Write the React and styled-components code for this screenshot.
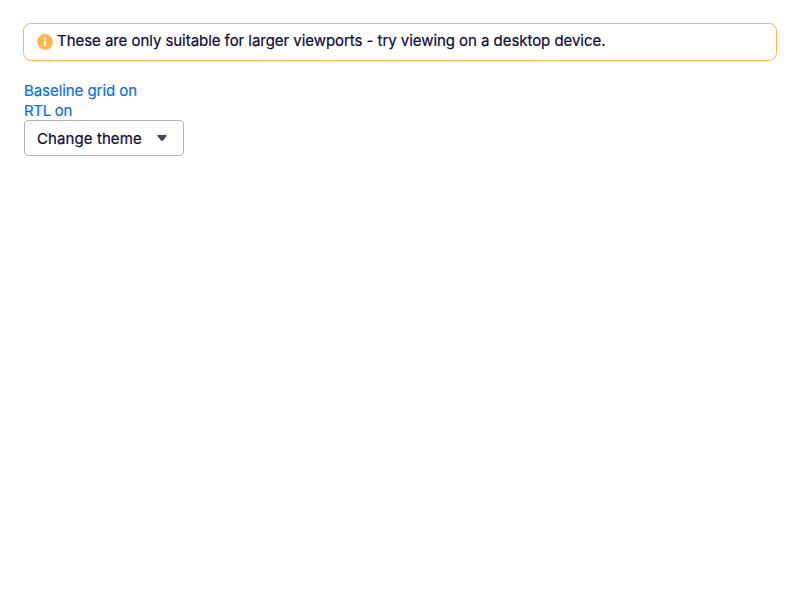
import React from "react";
import styled, { createGlobalStyle } from "styled-components";

const GlobalStyle = createGlobalStyle`
  * { box-sizing: border-box; }
  body {
    margin: 0;
    background: #fff;
    color: #0c0838;
    font: 400 15px/20px Inter, sans-serif;
    -webkit-text-stroke: 0.2px currentColor;
  }
`;

const Page = styled.main`
  display: flex;
  flex-direction: column;
  align-items: flex-start;
  padding: 23px 23px 0;
`;

const Banner = styled.div`
  display: flex;
  align-items: flex-start;
  align-self: stretch;
  height: 38px;
  padding: 7px 12px;
  border: 1px solid #ffb54d;
  border-radius: 8px;
`;

const InfoIcon = styled.svg`
  flex: none;
  width: 16px;
  height: 16px;
  margin: 3px 4px 0 1px;
`;

const FitText = styled.span`
  white-space: nowrap;
  letter-spacing: ${(p) => p.$spacing};
`;

const Controls = styled.div`
  display: flex;
  flex-direction: column;
  align-items: flex-start;
  margin: 20px 0 0 1px;
`;

const ActionLink = styled.a`
  color: #0770e3;
  text-decoration: none;
  cursor: pointer;
`;

const ThemeButton = styled.button`
  display: flex;
  align-items: flex-start;
  justify-content: space-between;
  width: 160px;
  height: 36px;
  margin-top: -1px;
  padding: 8px 16px 0 12px;
  border: 1px solid #b2b1bd;
  border-radius: 4px;
  background: #fff;
  color: inherit;
  font: inherit;
`;

const Caret = styled.svg`
  width: 10px;
  height: 6px;
  margin-top: 6px;
`;

export default function App() {
  return (
    <>
      <GlobalStyle />
      <Page>
        <Banner>
          <InfoIcon viewBox="0 0 16 16">
            <circle cx="8" cy="8" r="7.9" fill="#ffb54d" />
            <circle cx="8" cy="4.6" r="1.2" fill="#fff" />
            <rect x="7" y="6.8" width="2" height="5.4" rx="0.8" fill="#fff" />
          </InfoIcon>
          <FitText $spacing="-0.05px">
            These are only suitable for larger viewports - try viewing on a desktop device.
          </FitText>
        </Banner>
        <Controls>
          <ActionLink><FitText $spacing="-0.06px">Baseline grid on</FitText></ActionLink>
          <ActionLink><FitText $spacing="-0.3px">RTL on</FitText></ActionLink>
          <ThemeButton>
            <FitText $spacing="0.09px">Change theme</FitText>
            <Caret viewBox="0 0 10 6"><path d="M1 0h8q1 0 .7 1L6 5.5q-1 .8-2 0L.3 1Q0 0 1 0z" fill="#444560" /></Caret>
          </ThemeButton>
        </Controls>
      </Page>
    </>
  );
}
